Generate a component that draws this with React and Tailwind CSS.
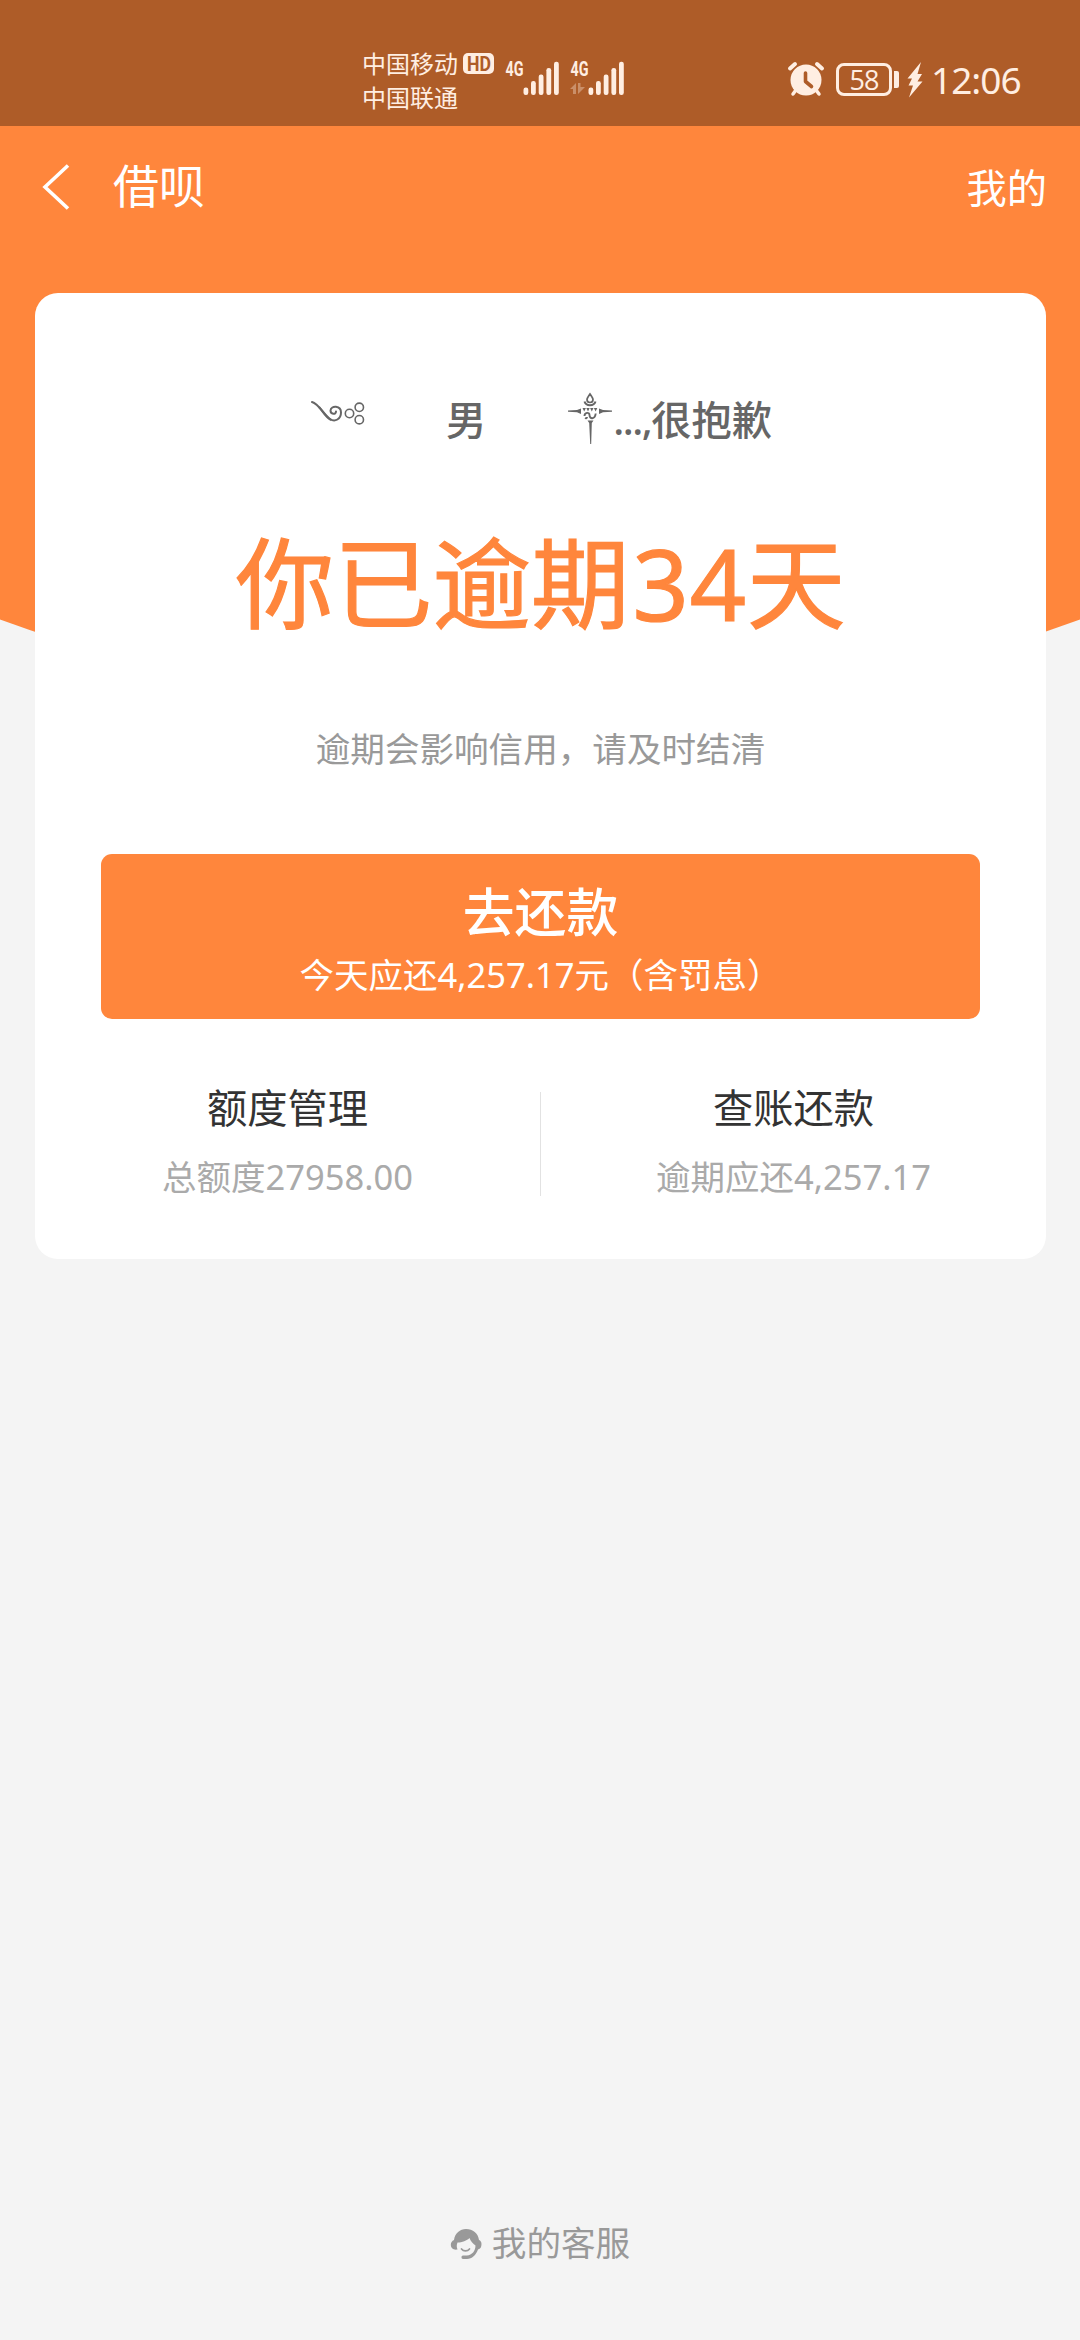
function Signal({ data }) {
  return (
    <svg className="overflow-visible" width="54" height="46" viewBox="0 -10 54 46" fill="#ffeee2">
      <text x="0.500" y="16" fontSize="20" fontWeight="700" fontFamily="Roboto, sans-serif" textLength="18" lengthAdjust="spacingAndGlyphs">4G</text>
      {data && (
        <path opacity=".35" d="M0 29 L6 23 V34 H3 V29 Z M8 23 H10.500 V27 H15 L8 34 Z" />
      )}
      <rect x="18.500" y="27.500" width="4.800" height="7.500" rx="2.200" />
      <rect x="26" y="21" width="4.800" height="14" rx="2.200" />
      <rect x="33.700" y="14.500" width="4.800" height="20.500" rx="2.200" />
      <rect x="41.400" y="8" width="4.800" height="27" rx="2.200" />
      <rect x="49" y="1.700" width="4.800" height="33.300" rx="2.200" />
    </svg>
  );
}

function AlarmIcon() {
  return (
    <svg width="38" height="36" viewBox="0 0 38 36" fill="none" strokeLinecap="round">
      <circle cx="19" cy="19" r="15.500" fill="#ffeee2" />
      <path d="M3 7.500 L8 3 M35 7.500 L30 3" stroke="#ffeee2" strokeWidth="4" />
      <path d="M9 29 L6 33 M29 29 L32 33" stroke="#ffeee2" strokeWidth="3.500" />
      <path d="M18.500 12 V20.500 L24.500 25.500" stroke="#ae5c28" strokeWidth="3.600" strokeLinejoin="round" />
    </svg>
  );
}

function StatusBar() {
  return (
    <div className="flex h-[126px] bg-[#ae5c28] text-[#ffeee2]">
      <div className="ml-[362px] mt-[47px] flex flex-col text-[24px] leading-[34px]">
        <span>中国移动</span>
        <span>中国联通</span>
      </div>
      <svg className="ml-[5px] mt-[53px]" width="31" height="21" viewBox="0 0 31 21">
        <rect width="31" height="21" rx="5" fill="#ffeee2" />
        <text x="4" y="17.500" fontSize="20" fontWeight="700" fontFamily="Roboto, sans-serif" fill="#ae5c28" textLength="24" lengthAdjust="spacingAndGlyphs">HD</text>
      </svg>
      <div className="ml-[11px] mt-[50px] flex gap-[11px]">
        <Signal />
        <Signal data />
      </div>
      <div className="ml-[163px] mt-[61px] flex">
        <AlarmIcon />
      </div>
      <div className="ml-[11px] mt-[63px] flex h-[33px] w-[56px] items-center justify-center rounded-[8px] border-[3px] border-[#ffeee2] text-[27px] leading-none tracking-[-1px]">
        <span className="font-['Open_Sans']">58</span>
      </div>
      <div className="ml-[2px] mt-[71px] h-[17px] w-[5px] rounded-r-[2px] bg-[#ffeee2]" />
      <svg className="ml-[8px] mt-[61px]" width="16" height="37" viewBox="0 0 16 37" fill="#ffeee2">
        <path d="M14 1 L0.500 17.500 H5 L1.500 24.500 H6 L2 36.500 L15.500 20.500 H10.500 L15 13 H10.500 Z" />
      </svg>
      <span className="ml-[8px] mt-[56px] text-[37px] leading-[48px] tracking-[-1px]">12:06</span>
    </div>
  );
}

function Swirl() {
  return (
    <svg width="54" height="56" viewBox="0 0 54 56" fill="none" stroke="#666" strokeWidth="1.600">
      <path d="M1 12 C8 14 13 25 19 29 C24 32.500 30 29 30 22.500 C30 15.500 20 15 19.500 20.500 C19.500 24.500 25 25 25 21.500" strokeWidth="2" strokeLinecap="round" />
      <path d="M8 17 C12 21.500 15 28 20 30" strokeWidth="2" />
      <circle cx="38.500" cy="23.500" r="4.200" />
      <circle cx="48.300" cy="17.300" r="4.200" />
      <circle cx="48.300" cy="29.700" r="4.200" />
    </svg>
  );
}

function Cross() {
  return (
    <svg width="46" height="56" viewBox="0 0 46 56" fill="none" stroke="#666" strokeWidth="1.700">
      <path d="M23 4 C21 7 20 8 20 9.500 A3 3 0 0 0 26 9.500 C26 8 25 7 23 4 Z" />
      <path d="M17.500 11.500 C19 16.500 27 16.500 28.500 11.500" strokeWidth="2" />
      <path d="M15.500 18 h3.400 l-1.700 3.400 Z M19.300 18 h3.400 l-1.700 3.400 Z M23.100 18 h3.400 l-1.700 3.400 Z M26.900 18 h3.400 l-1.700 3.400 Z" fill="#666" stroke="none" />
      <path d="M1 20.500 L10 20 L14 18.500 V24 L10 22.300 L1 21.800 Z M45 20.500 L36 20 L32 18.500 V24 L36 22.300 L45 21.800 Z M20.500 30.500 H26.500 L24.800 33 L24.200 54 H23.200 L22.200 33 Z" fill="#666" stroke="none" />
      <path d="M17.500 26 C17.500 22 22.500 22 22.500 25 C22.500 29.500 28 29.500 28.700 23.500 M18 28 C19 28.500 20 28 20 27" strokeWidth="1.900" />
    </svg>
  );
}

function SupportIcon() {
  return (
    <svg width="33" height="32" viewBox="0 0 33 32" fill="#999">
      <path d="M4 12 C5 5 10 1 16 1 C23 1 28 5 29 12 C30.500 12.500 31.500 14 31.500 16 C31.500 19 30.500 21 28 21.500 C26 27 22 31 17 31 H13 C11 31 11 27.500 13 27.500 H17 C22 27 25.500 23 25.500 17.500 C23 16 20.500 13 19.500 10 C17 12.500 12 14.500 7.500 14.500 C6.500 17 6.500 19 7.500 21.500 C3 22.200 0.800 20 0.800 17 C0.800 14.500 2 13 4 12 Z" />
      <path d="M11.500 21 C13.500 23.500 17.500 23.500 19.500 21" fill="none" stroke="#999" strokeWidth="1.700" strokeLinecap="round" />
    </svg>
  );
}

function Entry({ title, detail }) {
  return (
    <div className="flex flex-1 flex-col items-center">
      <span className="text-[40.3px] leading-[60px] text-[#333]">{title}</span>
      <span className="mt-[14px] text-[34.5px] leading-[50px] text-[#aaa]">{detail}</span>
    </div>
  );
}

export default function App() {
  return (
    <div className="relative isolate flex h-[2340px] w-[1080px] flex-col overflow-hidden bg-[#f4f4f4] font-['Noto_Sans','Noto_Sans_CJK_SC',sans-serif]" lang="zh-CN">
      <svg className="absolute left-0 top-[126px] -z-10" width="1080" height="560" viewBox="0 0 1080 560" fill="#ff863c">
        <path d="M0 0 H1080 V493.500 Q540 690 0 493.500 Z" />
      </svg>
      <StatusBar />
      <header className="flex h-[167px] items-start pl-[42px] pr-[33px] text-white">
        <svg className="mt-[38px]" width="28" height="46" viewBox="0 0 28 46" fill="none" stroke="#fff" strokeWidth="3.600">
          <path d="M26 1.500 L3 23 L26 44.500" />
        </svg>
        <h1 className="ml-[43px] mt-[29px] text-[46px] leading-[60px]">借呗</h1>
        <span className="ml-auto mt-[32px] text-[40.3px] leading-[60px]">我的</span>
      </header>
      <main className="ml-[35px] flex h-[966px] w-[1011px] flex-col rounded-[23px] bg-white">
        <div className="ml-[276px] mt-[97px] flex h-[60px] text-[40.3px] font-medium leading-[60px] text-[#666]">
          <Swirl />
          <span className="ml-[81px]">男</span>
          <div className="ml-[81px]"><Cross /></div>
          <span className="tracking-[-1.5px]">...,</span>
          <span>很抱歉</span>
        </div>
        <div className="mt-[63px] h-[140px] text-center text-[98.5px] leading-[140px] text-[#ff863c] [-webkit-text-stroke:1.200px_#ff863c]">
          你已逾期<span className="ml-[3px] tracking-[1px]">34</span>天
        </div>
        <p className="mt-[71px] text-center text-[34.6px] leading-[50px] text-[#999]">逾期会影响信用，请及时结清</p>
        <button className="mx-auto mt-[80px] flex h-[165px] w-[879px] flex-col items-center rounded-[11px] bg-[#ff863c] text-white">
          <span className="mt-[23px] text-[51.8px] font-medium leading-[70px]">去还款</span>
          <span className="mt-[3px] text-[34.5px] leading-[50px]">今天应还4,257.17元（含罚息）</span>
        </button>
        <div className="mt-[59px] flex">
          <Entry title="额度管理" detail="总额度27958.00" />
          <div className="mt-[14px] h-[104px] w-px bg-[#e2e2e2]" />
          <Entry title="查账还款" detail="逾期应还4,257.17" />
        </div>
      </main>
      <footer className="mt-auto flex h-[122px] items-start justify-center gap-[9px] text-[#999]">
        <span className="mt-[10px]"><SupportIcon /></span>
        <span className="text-[34.6px] leading-[50px]">我的客服</span>
      </footer>
    </div>
  );
}
